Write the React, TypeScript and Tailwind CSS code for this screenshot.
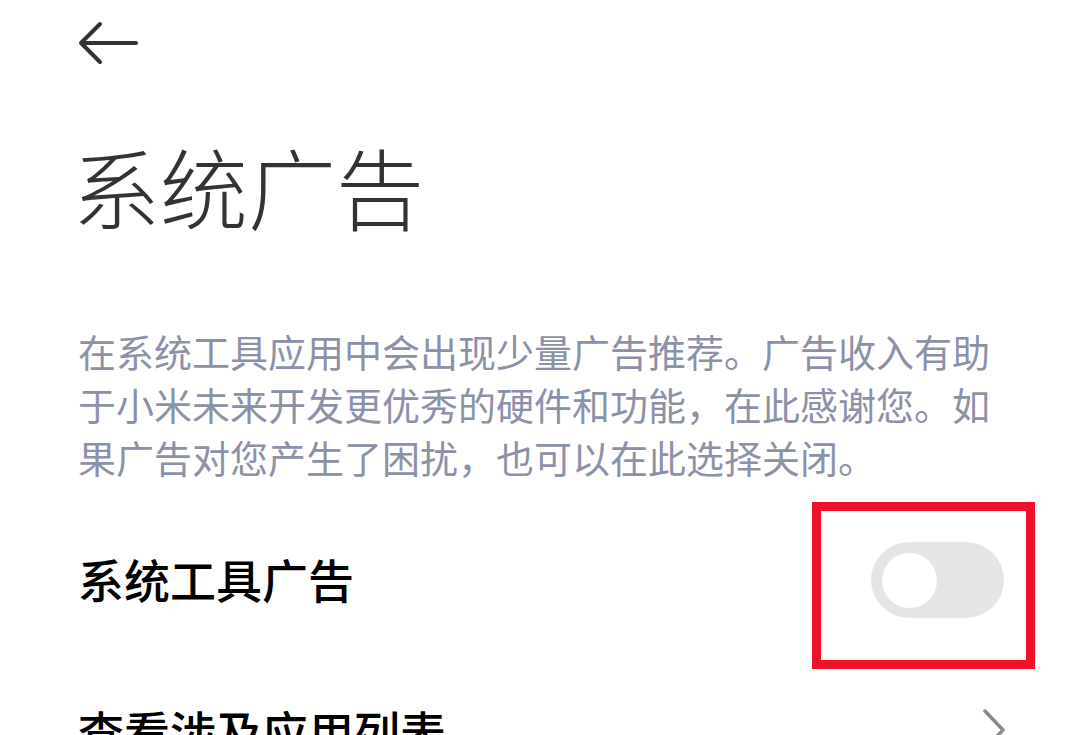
const cjk = "font-['Noto_Sans_CJK_SC','Noto_Sans',sans-serif]";

function BackArrow() {
  return (
    <svg width="60" height="44" viewBox="0 0 60 44" fill="none">
      <path
        d="M58 22H3M22 3L3 22L22 41"
        stroke="#333333"
        strokeWidth="4"
        strokeLinecap="round"
        strokeLinejoin="round"
      />
    </svg>
  );
}

function Toggle() {
  return (
    <div className="relative">
      <div className="w-[133px] h-[76px] rounded-full bg-[#e5e5e5] flex items-center pl-[11px]">
        <div className="w-[55px] h-[55px] rounded-full bg-white" />
      </div>
      {/* red highlight box */}
      <div className="absolute left-[-59px] top-[-40px] w-[223px] h-[167px] border-[9px] border-[#f0102a]" />
    </div>
  );
}

export default function App() {
  return (
    <div className={`w-[1080px] h-[735px] overflow-hidden bg-white ${cjk}`}>
      <div className="pl-[78px] pr-[76px]">
        {/* Header */}
        <div className="pt-[21px]">
          <BackArrow />
        </div>

        <h1 className="mt-[76px] ml-[-6px] text-[88px] leading-none font-light text-[#333333]">
          系统广告
        </h1>

        {/* Description */}
        <p className="mt-[95px] w-[920px] text-[38px] leading-[53px] text-[#8d91a8]">
          在系统工具应用中会出现少量广告推荐。广告收入有助于小米未来开发更优秀的硬件和功能，在此感谢您。如果广告对您产生了困扰，也可以在此选择关闭。
        </p>

        {/* Toggle row */}
        <div className="mt-[59px] flex items-center justify-between">
          <span className="text-[46px] leading-none font-medium text-black mt-[-4px]">系统工具广告</span>
          <Toggle />
        </div>

        {/* Link row */}
        <div className="mt-[89px] flex items-center justify-between">
          <span className="text-[46px] leading-none font-medium text-black">查看涉及应用列表</span>
          <svg width="24" height="44" viewBox="0 0 24 44" fill="none" className="mr-[-2px]">
            <path d="M3 3L21 22L3 41" stroke="#8a8a8a" strokeWidth="3.5" strokeLinecap="round" strokeLinejoin="round" />
          </svg>
        </div>
      </div>
    </div>
  );
}
